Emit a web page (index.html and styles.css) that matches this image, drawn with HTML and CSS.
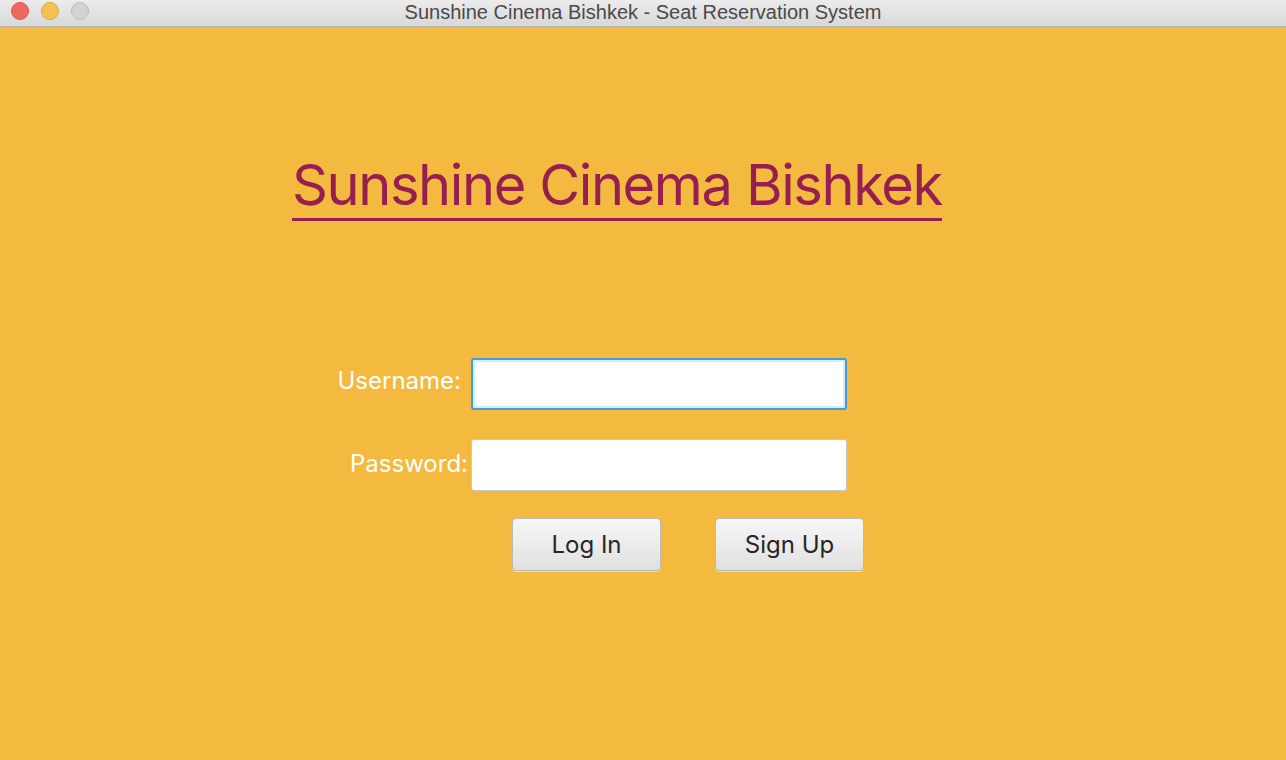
FILE: index.html
```html
<!DOCTYPE html>
<html>
<head>
<meta charset="utf-8">
<link rel="stylesheet" href="styles.css">
</head>
<body>
<div class="window">
  <div class="titlebar">
    <div class="lights">
      <span class="light red"></span>
      <span class="light yellow"></span>
      <span class="light gray"></span>
    </div>
    <div class="wintitle">Sunshine Cinema Bishkek - Seat Reservation System</div>
  </div>
  <div class="content">
    <h1 class="brand">Sunshine Cinema Bishkek</h1>
    <div class="form">
      <div class="row">
        <label class="label label-user">Username:</label>
        <div class="field focused"></div>
      </div>
      <div class="row">
        <label class="label label-pass">Password:</label>
        <div class="field"></div>
      </div>
      <div class="buttons">
        <button class="btn">Log In</button>
        <button class="btn">Sign Up</button>
      </div>
    </div>
  </div>
</div>
</body>
</html>
```
FILE: styles.css
```css
html, body {
  margin: 0;
  padding: 0;
  width: 1286px;
  height: 760px;
  overflow: hidden;
}
body {
  font-family: Inter, "Liberation Sans", sans-serif;
  background: #f4ba40;
}
.window {
  display: flex;
  flex-direction: column;
  height: 760px;
}
.titlebar {
  height: 26px;
  flex: none;
  background: linear-gradient(#ececec, #d8d8d8);
  border-bottom: 1px solid #b4b4b4;
  display: flex;
  align-items: center;
  position: relative;
}
.lights {
  display: flex;
  gap: 12px;
  padding-left: 11px;
  margin-top: -4px;
  align-items: center;
}
.light {
  width: 18px;
  height: 18px;
  border-radius: 50%;
  box-sizing: border-box;
}
.red { background: #ee6a5e; border: 1px solid #d85a50; }
.yellow { background: #f5c150; border: 1px solid #dca846; }
.gray { background: #d3d3d3; border: 1px solid #bdbdbd; }
.wintitle {
  position: absolute;
  left: 0;
  right: 0;
  top: 0;
  line-height: 24px;
  text-align: center;
  font-size: 20px;
  color: #4a4a4a;
  font-family: "Liberation Sans", sans-serif;
}
.content {
  flex: 1;
  display: flex;
  flex-direction: column;
  padding-left: 292px;
}
.brand {
  margin: 0;
  margin-top: 126px;
  font-weight: 400;
  font-size: 56px;
  line-height: 65px;
  color: #961f50;
  align-self: flex-start;
  border-bottom: 3px solid #961f50;
  letter-spacing: -1.4px;
}
.form {
  margin-top: 137px;
  display: flex;
  flex-direction: column;
  gap: 29px;
}
.row {
  display: flex;
  align-items: center;
}
.label {
  width: 179px;
  text-align: right;
  color: #ffffff;
  font-size: 24px;
  box-sizing: border-box;
}
.label-user { padding-right: 10px; margin-top: -8px; }
.label-pass { padding-right: 3px; margin-top: -4px; }
.field {
  width: 376px;
  height: 52px;
  box-sizing: border-box;
  background: #ffffff;
  border: 1px solid #c8c8c8;
  border-radius: 3px;
}
.field.focused {
  border: 2px solid #3d9ed9;
  box-shadow: inset 0 0 0 2px #d8ecf8;
}
.buttons {
  display: flex;
  gap: 54px;
  padding-left: 220px;
  margin-top: -2px;
}
.btn {
  width: 149px;
  height: 53px;
  box-sizing: border-box;
  border: 1px solid #b9b9b9;
  border-radius: 4px;
  background: linear-gradient(#f7f7f7, #e0e0e0);
  font-family: Inter, "Liberation Sans", sans-serif;
  font-size: 24px;
  color: #262626;
  padding: 0;
  box-shadow: 0 1px 0 rgba(255,255,255,0.5);
}
```
